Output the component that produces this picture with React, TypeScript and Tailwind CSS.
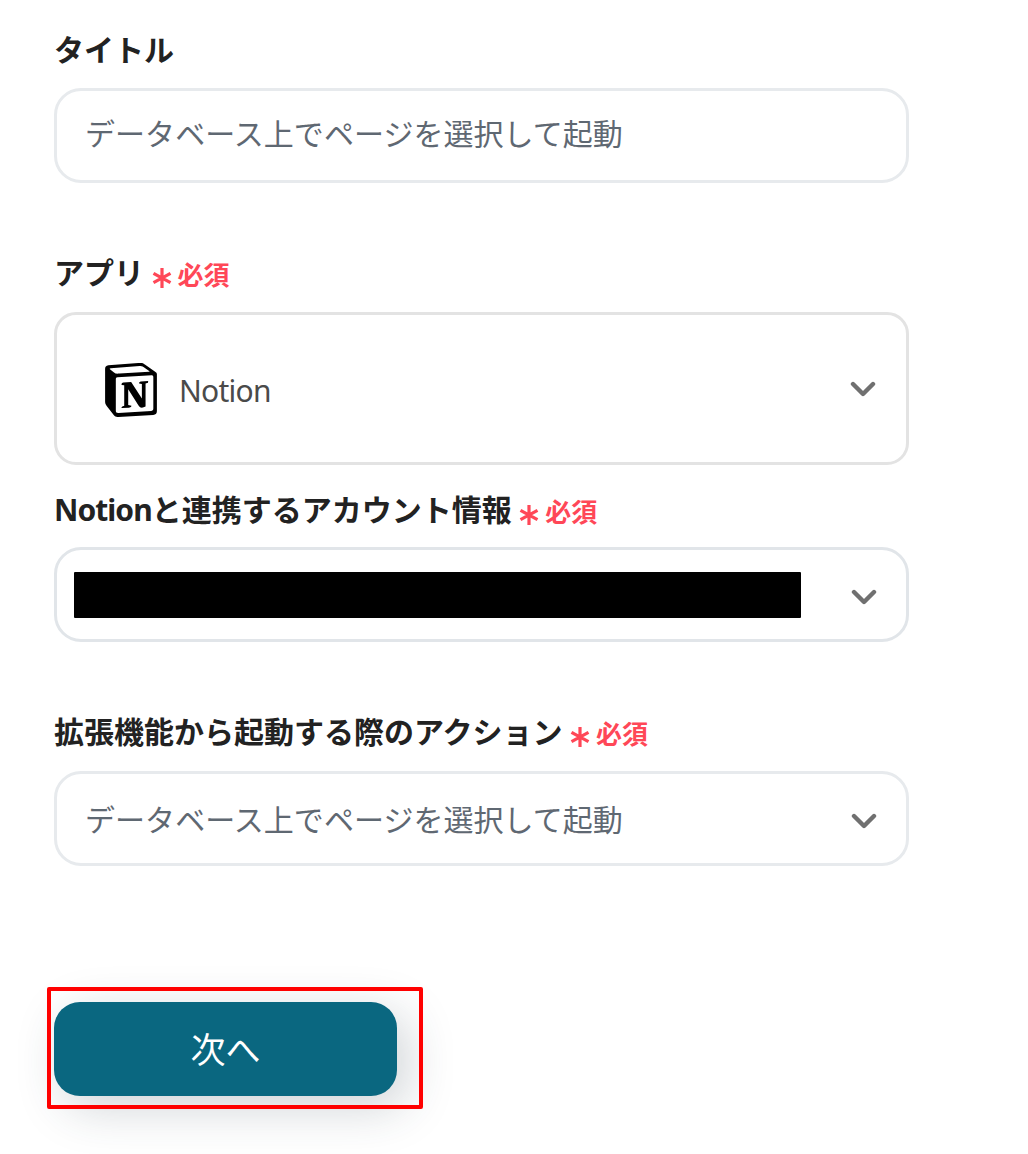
import type { ReactNode } from 'react'
import { SiNotion } from 'react-icons/si'


const Required = () => (
    <span className="flex items-center pt-[3px] text-[26px] font-bold text-[#ff4757]">
        <svg width="20" height="20" viewBox="0 0 20 20" className="mt-[7px] mr-1.5" fill="none" stroke="currentColor" strokeWidth="3.2">
            <path d="M10 0v20M1.5 5.3l17 9.4M18.5 5.3l-17 9.4" />
        </svg>
        必須
    </span>
)

const Label = ({ children, required }: { children: ReactNode, required?: boolean }) => (
    <div className="flex h-10 items-center gap-[7.5px] whitespace-nowrap leading-10">
        <span className="text-[30px] font-bold text-[#222]">{children}</span>
        {required && <Required />}
    </div>
)

const Chevron = () => (
    <svg width="26" height="18" viewBox="0 0 26 18" className="shrink-0" fill="none" stroke="#707070" strokeWidth="4.4" strokeLinecap="round" strokeLinejoin="round">
        <path d="M3 4l10 10L23 4" />
    </svg>
)


export default function App() {

    return (
        <div className="h-[1154px] w-[1028px] overflow-hidden bg-white pl-[54px] pt-[30px] font-['Noto_Sans','Noto_Sans_CJK_JP',sans-serif]">

            <div className="w-[855px]">

                <Label>タイトル</Label>
                <div className="mt-[18px] flex h-[95px] items-center rounded-[27px] border-3 border-[#e7eaed] pl-7 pb-1 text-[30px] tracking-[0.05px] text-[#5f6872]">
                    データベース上でページを選択して起動
                </div>

                <div className="mt-[70px]">
                    <Label required>アプリ</Label>
                </div>
                <div className="mt-[19px] flex h-[153px] items-center rounded-[22px] border-3 border-[#e3e3e3] pl-[47px] pr-[30px]">
                    <SiNotion className="mt-0.5 size-[54px] text-black" />
                    <span className="ml-[21px] mt-1 flex-1 text-[30px] tracking-[-0.75px] text-[#4a4a4a]">Notion</span>
                    <Chevron />
                </div>

                <div className="mt-[25px]">
                    <Label required><span className="tracking-[-0.95px]">Notion</span>と連携するアカウント情報</Label>
                </div>
                <div className="mt-[17px] flex h-[95px] items-center justify-between rounded-[27px] border-3 border-[#e1e5e9] pl-[17px] pr-[29px]">
                    <div className="h-[46px] w-[727px] rounded-[1px] bg-black"></div>
                    <div className="pt-1">
                        <Chevron />
                    </div>
                </div>

                <div className="mt-[70px]">
                    <Label required>拡張機能から起動する際のアクション</Label>
                </div>
                <div className="mt-[19px] flex h-[95px] items-center justify-between rounded-[27px] border-3 border-[#e7eaed] pl-7 pr-[29px] text-[30px] tracking-[0.05px] text-[#5f6872]">
                    <span className="pt-0.5">データベース上でページを選択して起動</span>
                    <div className="pt-1">
                        <Chevron />
                    </div>
                </div>

            </div>

            <div className="relative mt-[136px] w-[343px]">
                <button className="h-[94px] w-full rounded-[26px] bg-[#0a6780] pt-[3px] text-[35px] text-white shadow-[10px_12px_48px_rgba(40,60,75,0.22)]">
                    次へ
                </button>
                <div className="absolute -left-[7px] -top-[15px] h-[122px] w-[376px] rounded-[2px] border-4 border-[#ff0000]"></div>
            </div>

        </div>
    )

}
